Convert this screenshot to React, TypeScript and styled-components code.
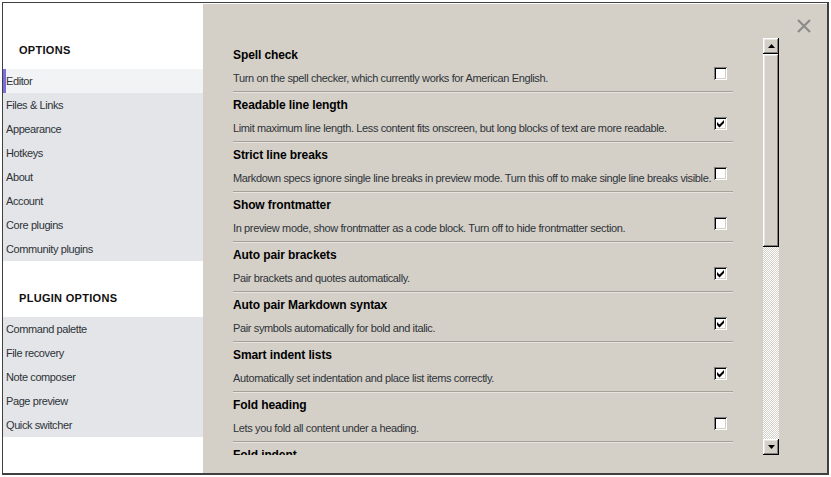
import React from "react";
import styled, { createGlobalStyle } from "styled-components";

const GlobalStyle = createGlobalStyle`
  html, body { margin: 0; padding: 0; background: #ffffff; overflow: hidden; }
  body { font-family: "Liberation Sans", Arial, sans-serif; }
  * { box-sizing: border-box; }
`;

const Desktop = styled.div`
  position: relative;
  width: 831px;
  height: 477px;
  background: #ffffff;
  overflow: hidden;
`;

const BackNote = styled.div`
  position: absolute;
  z-index: 0;
  top: -18px;
  left: 485px;
  font-size: 19px;
  line-height: 22px;
  color: #303030;
  white-space: nowrap;
`;

const Modal = styled.div`
  position: absolute;
  z-index: 1;
  left: 2px;
  top: 2px;
  width: 827px;
  height: 473px;
  display: flex;
  border-top: 1px solid #404040;
  border-left: 1px solid #404040;
  border-right: 2px solid #404040;
  border-bottom: 2px solid #404040;
  background: #ffffff;
`;

const Sidebar = styled.nav`
  width: 200px;
  flex: none;
  background: #ffffff;
  padding-top: 40px;
  display: flex;
  flex-direction: column;
`;

const SectionTitle = styled.div<{ $gapTop?: number }>`
  margin-top: ${(p) => p.$gapTop ?? 0}px;
  margin-bottom: 12px;
  padding-left: 16px;
  height: 14px;
  line-height: 14px;
  font-size: 11px;
  font-weight: bold;
  letter-spacing: 0.3px;
  color: #111111;
`;

const NavGroup = styled.div`
  display: flex;
  flex-direction: column;
  background: #e3e5e8;
`;

const NavItem = styled.div<{ $active?: boolean }>`
  height: 24px;
  line-height: 24px;
  padding-left: 3px;
  font-size: 11px;
  letter-spacing: -0.4px;
  color: #2e3338;
  white-space: nowrap;
  background: ${(p) => (p.$active ? "#f2f3f5" : "transparent")};
  box-shadow: ${(p) => (p.$active ? "inset 3px 0 0 #7b6ce0" : "none")};
`;

const Panel = styled.section`
  position: relative;
  flex: 1;
  background: #d4d0c8;
  border-top: 1px solid #ffffff;
  padding: 34px 48px 18px 0;
  display: flex;
`;

const CloseButton = styled.button`
  position: absolute;
  top: 15px;
  right: 16px;
  width: 14px;
  height: 14px;
  padding: 0;
  border: none;
  background: transparent;
  display: flex;
  align-items: center;
  justify-content: center;
`;

const ScrollArea = styled.div`
  flex: 1;
  display: flex;
  min-height: 0;
`;

const List = styled.div`
  flex: 1;
  overflow: hidden;
  padding: 5px 30px 0 30px;
  display: flex;
  flex-direction: column;
`;

const Item = styled.div`
  flex: none;
  display: grid;
  grid-template-columns: 1fr auto;
  grid-template-rows: 14px 14px;
  row-gap: 9px;
  column-gap: 3px;
  padding: 5px 0 6px 0;
  border-bottom: 1px solid #a4a09a;
  box-shadow: 0 1px 0 #e6e4df;
  margin-bottom: 1px;
`;

const ItemName = styled.div`
  grid-column: 1;
  grid-row: 1;
  font-size: 12px;
  line-height: 14px;
  font-weight: bold;
  letter-spacing: -0.1px;
  color: #000000;
  white-space: nowrap;
`;

const ItemDesc = styled.div`
  grid-column: 1;
  grid-row: 2;
  font-size: 11px;
  line-height: 14px;
  letter-spacing: -0.37px;
  color: #2e3338;
  white-space: nowrap;
  min-width: 0;
`;

const CheckBox = styled.div`
  grid-column: 2;
  grid-row: 1 / 3;
  align-self: end;
  width: 13px;
  height: 13px;
  margin: 0 6px 5px 0;
  background: #ffffff;
  box-shadow: inset 1px 1px 0 #808080, inset -1px -1px 0 #ffffff,
    inset 2px 2px 0 #000000, inset -2px -2px 0 #d4d0c8;
  display: flex;
`;

const ScrollBar = styled.div`
  width: 16px;
  flex: none;
  display: flex;
  flex-direction: column;
`;

const raised = `
  background: #d4d0c8;
  box-shadow: inset -1px -1px 0 #000000, inset 1px 1px 0 #ffffff,
    inset -2px -2px 0 #808080, inset 2px 2px 0 #e8e6e2;
`;

const ScrollButton = styled.div`
  height: 16px;
  flex: none;
  ${raised}
  display: flex;
  align-items: center;
  justify-content: center;
`;

const Thumb = styled.div<{ $h: number }>`
  height: ${(p) => p.$h}px;
  flex: none;
  ${raised}
`;

const Track = styled.div`
  flex: 1;
  background-color: #ffffff;
  background-image: repeating-conic-gradient(#d4d0c8 0 25%, #ffffff 0 50%);
  background-size: 2px 2px;
`;

const Check = () => (
  <svg width="13" height="13" viewBox="0 0 13 13">
    <polygon points="3,5 5.5,7.5 10,3 10,6 5.5,10.5 3,8" fill="#000" />
  </svg>
);

const Arrow = ({ up }: { up?: boolean }) => (
  <svg width="7" height="4" viewBox="0 0 7 4">
    {up ? <polygon points="0,4 7,4 3.5,0" fill="#000" /> : <polygon points="0,0 7,0 3.5,4" fill="#000" />}
  </svg>
);

const CloseIcon = () => (
  <svg width="14" height="14" viewBox="0 0 14 14">
    <path d="M1 1 L13 13 M13 1 L1 13" stroke="#8c8c8c" strokeWidth="2.2" fill="none" />
  </svg>
);

const options = ["Editor", "Files & Links", "Appearance", "Hotkeys", "About", "Account", "Core plugins", "Community plugins"];
const pluginOptions = ["Command palette", "File recovery", "Note composer", "Page preview", "Quick switcher"];

const settings: { name: string; desc: string; checked: boolean }[] = [
  { name: "Spell check", desc: "Turn on the spell checker, which currently works for American English.", checked: false },
  { name: "Readable line length", desc: "Limit maximum line length. Less content fits onscreen, but long blocks of text are more readable.", checked: true },
  { name: "Strict line breaks", desc: "Markdown specs ignore single line breaks in preview mode. Turn this off to make single line breaks visible.", checked: false },
  { name: "Show frontmatter", desc: "In preview mode, show frontmatter as a code block. Turn off to hide frontmatter section.", checked: false },
  { name: "Auto pair brackets", desc: "Pair brackets and quotes automatically.", checked: true },
  { name: "Auto pair Markdown syntax", desc: "Pair symbols automatically for bold and italic.", checked: true },
  { name: "Smart indent lists", desc: "Automatically set indentation and place list items correctly.", checked: true },
  { name: "Fold heading", desc: "Lets you fold all content under a heading.", checked: false },
  { name: "Fold indent", desc: "Lets you fold part of an indentation, similar to folding headings.", checked: false },
];

export default function App() {
  return (
    <>
      <GlobalStyle />
      <Desktop>
        <BackNote>Hi there! I'm a note in</BackNote>
        <Modal>
          <Sidebar>
            <SectionTitle>OPTIONS</SectionTitle>
            <NavGroup>
              {options.map((o, i) => (
                <NavItem key={o} $active={i === 0}>{o}</NavItem>
              ))}
            </NavGroup>
            <SectionTitle $gapTop={30}>PLUGIN OPTIONS</SectionTitle>
            <NavGroup>
              {pluginOptions.map((o) => (
                <NavItem key={o}>{o}</NavItem>
              ))}
            </NavGroup>
          </Sidebar>
          <Panel>
            <CloseButton aria-label="Close">
              <CloseIcon />
            </CloseButton>
            <ScrollArea>
              <List>
                {settings.map((s) => (
                  <Item key={s.name}>
                    <ItemName>{s.name}</ItemName>
                    <ItemDesc>{s.desc}</ItemDesc>
                    <CheckBox>{s.checked && <Check />}</CheckBox>
                  </Item>
                ))}
              </List>
              <ScrollBar>
                <ScrollButton><Arrow up /></ScrollButton>
                <Thumb $h={193} />
                <Track />
                <ScrollButton><Arrow /></ScrollButton>
              </ScrollBar>
            </ScrollArea>
          </Panel>
        </Modal>
      </Desktop>
    </>
  );
}
